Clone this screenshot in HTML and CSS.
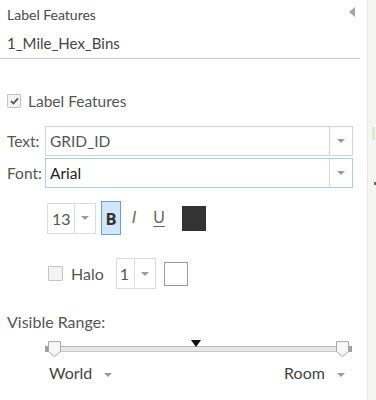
FILE: index.html
```html
<!DOCTYPE html>
<html>
<head>
<meta charset="utf-8">
<link rel="stylesheet" href="styles.css">
</head>
<body>
<div class="page">
  <div class="panel">
    <div class="title">
      <span>Label Features</span>
      <span class="collapse"></span>
    </div>
    <div class="layer">1_Mile_Hex_Bins</div>

    <label class="enable">
      <span class="cb checked">
        <svg width="9" height="8" viewBox="0 0 9 8"><path d="M1 4.2 L3.4 6.5 L8 1.3" fill="none" stroke="#555" stroke-width="1.8"/></svg>
      </span>
      <span>Label Features</span>
    </label>

    <div class="field">
      <span class="flabel">Text:</span>
      <div class="select">
        <span class="value">GRID_ID</span>
        <span class="arrowbox"><span class="caret"></span></span>
      </div>
    </div>
    <div class="field font">
      <span class="flabel">Font:</span>
      <div class="select focus">
        <span class="value dark">Arial</span>
        <span class="arrowbox"><span class="caret"></span></span>
      </div>
    </div>

    <div class="stylerow">
      <div class="mini size">
        <span class="mval">13</span>
        <span class="marrow"><span class="caret"></span></span>
      </div>
      <span class="btn bold active">B</span>
      <span class="btn italic">I</span>
      <span class="btn under">U</span>
      <span class="swatch dark"></span>
    </div>

    <div class="halorow">
      <span class="cb"></span>
      <span class="halo">Halo</span>
      <div class="mini halosize">
        <span class="mval">1</span>
        <span class="marrow"><span class="caret"></span></span>
      </div>
      <span class="swatch light"></span>
    </div>

    <div class="rangelabel">Visible Range:</div>
    <div class="slider">
      <span class="pointer"></span>
      <div class="track">
        <span class="end left"></span>
        <span class="bar"></span>
        <span class="end right"></span>
      </div>
      <span class="handle h-left"><svg width="13" height="16" viewBox="0 0 13 16"><path d="M0.5 0.5 H12.5 V10.5 L6.5 15.5 L0.5 10.5 Z" fill="#f7f7f7" stroke="#aaa"/></svg></span>
      <span class="handle h-right"><svg width="13" height="16" viewBox="0 0 13 16"><path d="M0.5 0.5 H12.5 V10.5 L6.5 15.5 L0.5 10.5 Z" fill="#f7f7f7" stroke="#aaa"/></svg></span>
    </div>
    <div class="scales">
      <span class="scale">World <span class="caret"></span></span>
      <span class="scale">Room <span class="caret"></span></span>
    </div>
  </div>
  <div class="map">
    <span class="spot green"></span>
    <span class="spot darkspot"></span>
  </div>
</div>
</body>
</html>
```
FILE: styles.css
```css
html, body {
  margin: 0;
  padding: 0;
  background: #fff;
}
.page {
  display: flex;
  width: 376px;
  height: 400px;
  overflow: hidden;
}
.panel {
  width: 368px;
  flex: none;
  box-sizing: border-box;
  border-right: 1px solid #e8e8e8;
  font-family: Lato, "Open Sans", sans-serif;
  color: #4c4c4c;
}
.map {
  flex: 1;
  background: #f5f5f1;
  position: relative;
}
.spot {
  position: absolute;
  width: 3px;
}
.spot.green { left: 4px; top: 127px; height: 13px; background: #dfe9cc; }
.spot.darkspot { left: 6px; top: 182px; height: 3px; background: #666; width: 2px; }

.title {
  height: 28px;
  display: flex;
  align-items: center;
  justify-content: space-between;
  padding: 0 12px 0 7px;
  font-size: 14px;
  color: #4a4a4a;
}
.collapse {
  width: 0;
  height: 0;
  border-top: 5.5px solid transparent;
  border-bottom: 5.5px solid transparent;
  border-right: 6px solid #a6a6a6;
  margin-top: -5px;
}
.layer {
  width: 360px;
  box-sizing: border-box;
  height: 31px;
  line-height: 30px;
  padding-left: 7px;
  font-size: 15px;
  border-bottom: 1px solid #c8c8c8;
  color: #444;
}
.enable {
  display: flex;
  align-items: center;
  gap: 7px;
  height: 20px;
  margin-top: 32px;
  padding-left: 7px;
  font-size: 15.5px;
  color: #555;
}
.cb {
  width: 12px;
  height: 12px;
  border: 1px solid #c4c4c4;
  background: #f3f3f3;
  border-radius: 1px;
  display: flex;
  align-items: center;
  justify-content: center;
  flex: none;
}
.field {
  display: flex;
  align-items: center;
  height: 30px;
  margin-top: 15px;
  padding-left: 7px;
  font-size: 15.5px;
}
.field.font { margin-top: 2px; }
.flabel {
  width: 38px;
  flex: none;
  color: #555;
}
.select {
  width: 308px;
  height: 30px;
  box-sizing: border-box;
  border: 1px solid #d4d4d4;
  display: flex;
  align-items: center;
}
.select.focus { border-color: #a6cfee; }
.value {
  flex: 1;
  padding-left: 4px;
  color: #555;
}
.value.dark { color: #222; }
.arrowbox {
  width: 22px;
  height: 100%;
  border-left: 1px solid #d4d4d4;
  display: flex;
  align-items: center;
  justify-content: center;
}
.select.focus .arrowbox { border-left-color: #d8d8d8; }
.caret {
  display: inline-block;
  width: 0;
  height: 0;
  border-left: 4.5px solid transparent;
  border-right: 4.5px solid transparent;
  border-top: 4px solid #9a9a9a;
}

.stylerow {
  display: flex;
  align-items: center;
  height: 34px;
  margin-top: 13px;
  padding-left: 47px;
}
.mini {
  height: 31px;
  box-sizing: border-box;
  border: 1px solid #dcdcdc;
  display: flex;
  align-items: center;
  font-size: 16px;
  color: #555;
}
.mini.size { width: 49px; }
.mval {
  width: 26px;
  padding-left: 4px;
  box-sizing: border-box;
  text-align: left;
}
.marrow {
  flex: 1;
  height: 100%;
  border-left: 1px solid #dcdcdc;
  display: flex;
  align-items: center;
  justify-content: center;
}
.btn {
  display: flex;
  align-items: center;
  justify-content: center;
  font-family: "Open Sans", Lato, sans-serif;
  font-size: 16px;
  color: #555;
}
.btn.bold {
  width: 20px;
  height: 34px;
  box-sizing: border-box;
  margin-left: 5px;
  font-weight: bold;
  font-size: 16.5px;
  color: #333;
}
.btn.active {
  background: #d3e6f7;
  border: 1px solid #5ba4dc;
}
.btn.italic {
  margin-left: 7px;
  width: 12px;
  font-style: italic;
  font-family: "Liberation Sans", sans-serif;
  color: #666;
}
.btn.under {
  margin-left: 12px;
  width: 14px;
  text-decoration: underline;
  text-underline-offset: 3px;
  font-family: "Liberation Sans", sans-serif;
  color: #666;
  font-size: 16px;
}
.swatch {
  width: 24px;
  height: 25px;
  box-sizing: border-box;
  border: 1px solid #999;
}
.stylerow .swatch { margin-left: 16px; }
.swatch.dark { background: #333; border-color: #333; }
.swatch.light { background: #fff; height: 24px; }

.halorow {
  display: flex;
  align-items: center;
  height: 31px;
  margin-top: 23px;
  padding-left: 48px;
  font-size: 16px;
}
.halorow .cb { width: 13px; height: 13px; }
.halo {
  margin-left: 8px;
  color: #555;
}
.mini.halosize {
  width: 40px;
  margin-left: 12px;
}
.mini.halosize .mval { width: 17px; padding-left: 3px; }
.halorow .swatch { margin-left: 8px; }

.rangelabel {
  height: 20px;
  line-height: 20px;
  margin-top: 23px;
  padding-left: 7px;
  font-size: 16px;
  color: #555;
}
.slider {
  position: relative;
  margin-top: 8px;
  margin-left: 45px;
  width: 307px;
  height: 18px;
}
.track {
  position: absolute;
  left: 0;
  right: 0;
  top: 6px;
  height: 6px;
  display: flex;
  align-items: center;
}
.end {
  width: 6px;
  height: 6px;
  background: #a0a0a0;
  flex: none;
}
.bar {
  flex: 1;
  height: 6px;
  box-sizing: border-box;
  background: #e6e6e6;
  border-top: 1px solid #b8b8b8;
  border-bottom: 1px solid #c8c8c8;
}
.handle {
  position: absolute;
  top: 1px;
  width: 13px;
  height: 16px;
  line-height: 0;
}
.h-left { left: 3px; }
.h-right { left: 291px; }
.pointer {
  position: absolute;
  left: 146px;
  top: 0;
  width: 0;
  height: 0;
  border-left: 5px solid transparent;
  border-right: 5px solid transparent;
  border-top: 7px solid #111;
  z-index: 2;
}
.scales {
  display: flex;
  justify-content: space-between;
  width: 296px;
  margin-left: 49px;
  margin-top: 4px;
  height: 22px;
  line-height: 22px;
  font-size: 16px;
  color: #444;
}
.scale .caret {
  margin-left: 8px;
  vertical-align: middle;
}
```
